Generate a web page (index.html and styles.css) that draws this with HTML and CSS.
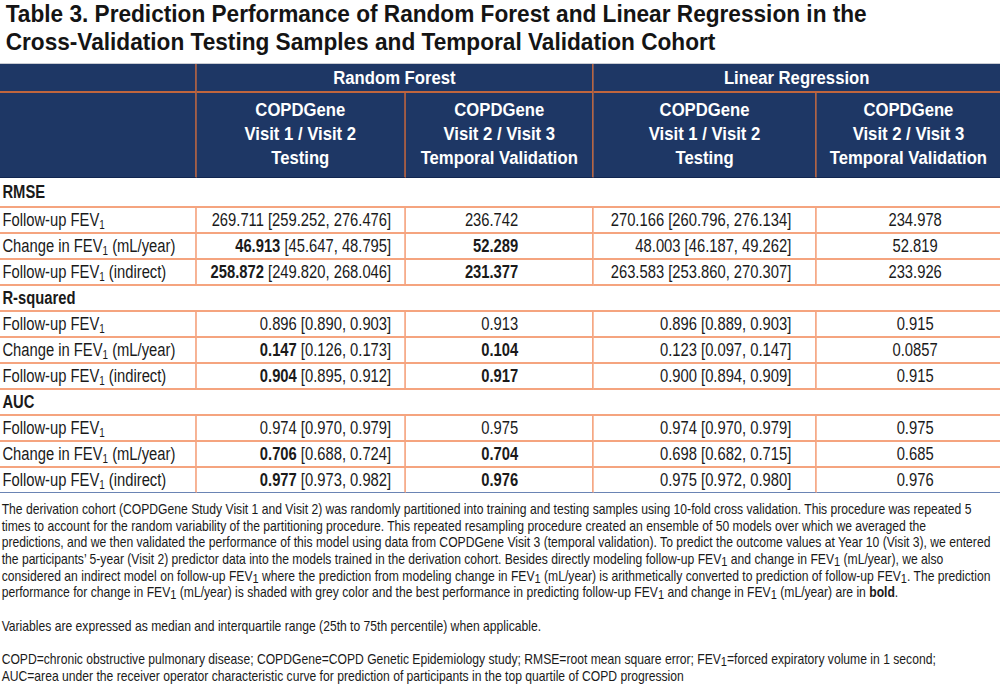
FILE: index.html
```html
<!DOCTYPE html>
<html lang="en">
<head>
<meta charset="utf-8">
<title>Table 3</title>
<link rel="stylesheet" href="styles.css">
</head>
<body>
<div class="page">
<h1 class="title">Table 3. Prediction Performance of Random Forest and Linear Regression in the<br>Cross-Validation Testing Samples and Temporal Validation Cohort</h1>
<table class="tbl">
  <colgroup>
    <col class="c1"><col class="c2"><col class="c3"><col class="c4"><col class="c5">
  </colgroup>
  <thead>
    <tr class="h1row">
      <th class="hl"></th>
      <th colspan="2" class="hb"><span class="ht">Random Forest</span></th>
      <th colspan="2" class="hlast"><span class="ht">Linear Regression</span></th>
    </tr>
    <tr class="h2row">
      <th class="hl"></th>
      <th class="hb"><span class="ht">COPDGene<br>Visit 1 / Visit 2<br>Testing</span></th>
      <th class="hb"><span class="ht">COPDGene<br>Visit 2 / Visit 3<br>Temporal Validation</span></th>
      <th class="hb"><span class="ht">COPDGene<br>Visit 1 / Visit 2<br>Testing</span></th>
      <th class="hlast"><span class="ht">COPDGene<br>Visit 2 / Visit 3<br>Temporal Validation</span></th>
    </tr>
  </thead>
  <tbody>
    <tr class="sec first"><td colspan="5">RMSE</td></tr>
    <tr>
      <td class="lab">Follow-up FEV<sub class="s">1</sub></td>
      <td class="v2">269.711 [259.252, 276.476]</td>
      <td class="v3">236.742</td>
      <td class="v4">270.166 [260.796, 276.134]</td>
      <td class="v5">234.978</td>
    </tr>
    <tr>
      <td class="lab">Change in FEV<sub class="s">1</sub> (mL/year)</td>
      <td class="v2"><b>46.913</b> [45.647, 48.795]</td>
      <td class="v3"><b>52.289</b></td>
      <td class="v4">48.003 [46.187, 49.262]</td>
      <td class="v5">52.819</td>
    </tr>
    <tr>
      <td class="lab">Follow-up FEV<sub class="s">1</sub> (indirect)</td>
      <td class="v2"><b>258.872</b> [249.820, 268.046]</td>
      <td class="v3"><b>231.377</b></td>
      <td class="v4">263.583 [253.860, 270.307]</td>
      <td class="v5">233.926</td>
    </tr>
    <tr class="sec"><td colspan="5">R-squared</td></tr>
    <tr>
      <td class="lab">Follow-up FEV<sub class="s">1</sub></td>
      <td class="v2">0.896 [0.890, 0.903]</td>
      <td class="v3">0.913</td>
      <td class="v4">0.896 [0.889, 0.903]</td>
      <td class="v5">0.915</td>
    </tr>
    <tr>
      <td class="lab">Change in FEV<sub class="s">1</sub> (mL/year)</td>
      <td class="v2"><b>0.147</b> [0.126, 0.173]</td>
      <td class="v3"><b>0.104</b></td>
      <td class="v4">0.123 [0.097, 0.147]</td>
      <td class="v5">0.0857</td>
    </tr>
    <tr>
      <td class="lab">Follow-up FEV<sub class="s">1</sub> (indirect)</td>
      <td class="v2"><b>0.904</b> [0.895, 0.912]</td>
      <td class="v3"><b>0.917</b></td>
      <td class="v4">0.900 [0.894, 0.909]</td>
      <td class="v5">0.915</td>
    </tr>
    <tr class="sec"><td colspan="5">AUC</td></tr>
    <tr>
      <td class="lab">Follow-up FEV<sub class="s">1</sub></td>
      <td class="v2">0.974 [0.970, 0.979]</td>
      <td class="v3">0.975</td>
      <td class="v4">0.974 [0.970, 0.979]</td>
      <td class="v5">0.975</td>
    </tr>
    <tr>
      <td class="lab">Change in FEV<sub class="s">1</sub> (mL/year)</td>
      <td class="v2"><b>0.706</b> [0.688, 0.724]</td>
      <td class="v3"><b>0.704</b></td>
      <td class="v4">0.698 [0.682, 0.715]</td>
      <td class="v5">0.685</td>
    </tr>
    <tr class="last">
      <td class="lab">Follow-up FEV<sub class="s">1</sub> (indirect)</td>
      <td class="v2"><b>0.977</b> [0.973, 0.982]</td>
      <td class="v3"><b>0.976</b></td>
      <td class="v4">0.975 [0.972, 0.980]</td>
      <td class="v5">0.976</td>
    </tr>
  </tbody>
</table>
<div class="notes">
  <p>The derivation cohort (COPDGene Study Visit 1 and Visit 2) was randomly partitioned into training and testing samples using 10-fold cross validation. This procedure was repeated 5<br>times to account for the random variability of the partitioning procedure. This repeated resampling procedure created an ensemble of 50 models over which we averaged the<br>predictions, and we then validated the performance of this model using data from COPDGene Visit 3 (temporal validation). To predict the outcome values at Year 10 (Visit 3), we entered<br>the participants’ 5-year (Visit 2) predictor data into the models trained in the derivation cohort. Besides directly modeling follow-up FEV<sub class="fs">1</sub> and change in FEV<sub class="fs">1</sub> (mL/year), we also<br>considered an indirect model on follow-up FEV<sub class="fs">1</sub> where the prediction from modeling change in FEV<sub class="fs">1</sub> (mL/year) is arithmetically converted to prediction of follow-up FEV<sub class="fs">1</sub>. The prediction<br>performance for change in FEV<sub class="fs">1</sub> (mL/year) is shaded with grey color and the best performance in predicting follow-up FEV<sub class="fs">1</sub> and change in FEV<sub class="fs">1</sub> (mL/year) are in <b>bold</b>.</p>
  <p>Variables are expressed as median and interquartile range (25th to 75th percentile) when applicable.</p>
  <p>COPD=chronic obstructive pulmonary disease; COPDGene=COPD Genetic Epidemiology study; RMSE=root mean square error; FEV<sub class="fs">1</sub>=forced expiratory volume in 1 second;<br>AUC=area under the receiver operator characteristic curve for prediction of participants in the top quartile of COPD progression</p>
</div>
</div>
</body>
</html>
```
FILE: styles.css
```css
html, body {
  margin: 0;
  padding: 0;
  background: #ffffff;
}
body {
  width: 1000px;
  overflow: hidden;
  font-family: "Liberation Sans", Arial, sans-serif;
  color: #1a1a1a;
}
/* Narrow (Arial Narrow-like) rendering: lay out at 1220px and compress horizontally */
.page {
  width: 1220px;
  transform: scaleX(0.82);
  transform-origin: 0 0;
}
.title {
  margin: 0;
  width: 1060px;
  padding-left: 6px;
  font-size: 24px;
  line-height: 28px;
  font-weight: bold;
  color: #141414;
  white-space: nowrap;
  transform: scaleX(1.15);
  transform-origin: 0 0;
}
.tbl {
  margin-top: 7px;
  width: 1220px;
  table-layout: fixed;
  border-collapse: separate;
  border-spacing: 0;
  border-top: 1px solid #c9ccd3;
}
.c1 { width: 240px; }
.c2 { width: 255px; }
.c3 { width: 229px; }
.c4 { width: 272px; }
.c5 { width: 224px; }
thead th {
  background: #1e3765;
  color: #ffffff;
  font-weight: bold;
  font-size: 18px;
  padding: 0;
  text-align: center;
  vertical-align: top;
}
.ht {
  display: inline-block;
  vertical-align: top;
  white-space: nowrap;
  transform: scaleX(1.13);
}
.h1row th {
  padding-top: 2px;
  line-height: 25px;
  border-bottom: 2px solid #c0653d;
}
.h2row th {
  line-height: 24px;
  padding: 5px 0 7px;
  border-bottom: 1px solid #112650;
}
thead .hl, thead .hb {
  border-right: 2px solid #c0653d;
}
tbody td {
  font-size: 18px;
  line-height: 24px;
  padding: 0;
  border-bottom: 2px solid #f5a47f;
  white-space: nowrap;
}
tbody .sec td {
  font-weight: bold;
  padding-left: 3px;
  line-height: 24px;
}
tbody .sec.first td {
  line-height: 28px;
}
.lab, .v2, .v3, .v4 {
  border-right: 2px solid #f5a47f;
}
.lab { padding-left: 3px; }
.v2 { text-align: right; padding-right: 16px; }
.v3 { text-align: right; padding-right: 90px; }
.v4 { text-align: right; padding-right: 29px; }
.v5 { text-align: center; padding-left: 16px; }
tbody .last td {
  line-height: 24px;
  border-bottom: 1px solid #6a84b4;
}
.s {
  font-size: 12px;
  line-height: 0;
  vertical-align: -3px;
}
.notes {
  margin-top: 8px;
  font-size: 14.8px;
  line-height: 16.67px;
  padding-left: 2px;
  color: #1a1a1a;
}
.notes p {
  margin: 0 0 16.67px;
  white-space: nowrap;
}
.fs {
  font-size: 13.5px;
  line-height: 0;
  vertical-align: -2px;
}
```
